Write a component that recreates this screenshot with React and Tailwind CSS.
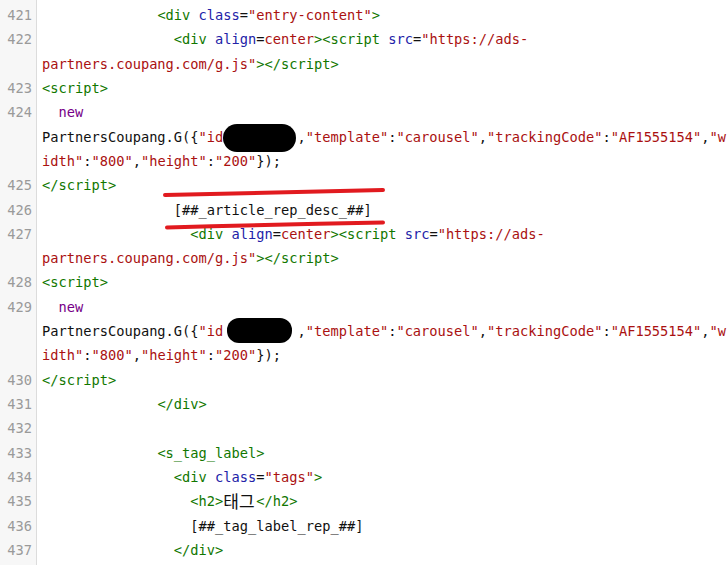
import React from "react";

const T = "text-[#117700]";
const A = "text-[#2222a8]";
const S = "text-[#aa1111]";
const K = "text-[#770088]";
const P = "text-[#111111]";

const sp = (n) => " ".repeat(n);

const scriptOpen = (indent) => [
  [P, sp(indent)],
  [T, "<div"],
  [P, " "],
  [A, "align"],
  [P, "="],
  [S, "center"],
  [T, "><script"],
  [P, " "],
  [A, "src"],
  [P, "="],
  [S, '"https://ads-'],
];

const scriptWrap = [
  [S, 'partners.coupang.com/g.js"'],
  [T, "></script>"],
];

const gLine = [
  [P, "PartnersCoupang.G({"],
  [S, '"id'],
  [P, sp(9)],
  [P, ","],
  [S, '"template"'],
  [P, ":"],
  [S, '"carousel"'],
  [P, ","],
  [S, '"trackingCode"'],
  [P, ":"],
  [S, '"AF1555154"'],
  [P, ","],
  [S, '"w'],
];

const gLine2 = [
  [S, 'idth"'],
  [P, ":"],
  [S, '"800"'],
  [P, ","],
  [S, '"height"'],
  [P, ":"],
  [S, '"200"'],
  [P, "});"],
];

const rows = [
  {
    n: 421,
    s: [
      [P, sp(14)],
      [T, "<div"],
      [P, " "],
      [A, "class"],
      [P, "="],
      [S, '"entry-content"'],
      [T, ">"],
    ],
  },
  { n: 422, s: scriptOpen(16) },
  { n: null, s: scriptWrap },
  { n: 423, s: [[T, "<script>"]] },
  { n: 424, s: [[P, "  "], [K, "new"]] },
  { n: null, s: gLine },
  { n: null, s: gLine2 },
  { n: 425, s: [[T, "</script>"]] },
  { n: 426, s: [[P, sp(16) + "[##_article_rep_desc_##]"]] },
  { n: 427, s: scriptOpen(18) },
  { n: null, s: scriptWrap },
  { n: 428, s: [[T, "<script>"]] },
  { n: 429, s: [[P, "  "], [K, "new"]] },
  { n: null, s: gLine },
  { n: null, s: gLine2 },
  { n: 430, s: [[T, "</script>"]] },
  { n: 431, s: [[P, sp(14)], [T, "</div>"]] },
  { n: 432, s: [] },
  { n: 433, s: [[P, sp(14)], [T, "<s_tag_label>"]] },
  {
    n: 434,
    s: [
      [P, sp(16)],
      [T, "<div"],
      [P, " "],
      [A, "class"],
      [P, "="],
      [S, '"tags"'],
      [T, ">"],
    ],
  },
  { n: 435, s: [[P, sp(18)], [T, "<h2>"], ["cjk", "태그"], [T, "</h2>"]] },
  { n: 436, s: [[P, sp(18) + "[##_tag_label_rep_##]"]] },
  { n: 437, s: [[P, sp(16)], [T, "</div>"]] },
];

export default function App() {
  return (
    <div className="relative flex h-[565px] w-[728px] overflow-hidden bg-white font-['DejaVu_Sans_Mono','Noto_Sans_CJK_KR',monospace] text-[13.7px]">
      <div className="flex w-[37px] shrink-0 flex-col border-r border-[#dcdcdc] bg-[#f7f7f7] pt-[3px] pr-[4px] text-right text-[#9a9a9a]">
        {rows.map((r, i) => (
          <div key={i} className="h-[24.32px] leading-[24.32px] whitespace-pre">
            {r.n ?? ""}
          </div>
        ))}
      </div>
      <div className="flex min-w-0 flex-1 flex-col pt-[3px] pl-[5px]">
        {rows.map((r, i) => (
          <div key={i} className="h-[24.32px] leading-[24.32px] whitespace-pre overflow-visible">
            {r.s.map(([c, t], j) =>
              c === "cjk" ? (
                <span
                  key={j}
                  className="inline-block w-[33px] overflow-visible text-[17px] tracking-[0px] leading-[24.32px] text-[#111111] font-['Noto_Sans_CJK_KR',sans-serif] align-top"
                >
                  {t}
                </span>
              ) : (
                <span key={j} className={c}>
                  {t}
                </span>
              )
            )}
          </div>
        ))}
      </div>
      <svg
        className="pointer-events-none absolute left-0 top-0"
        width="728"
        height="565"
        viewBox="0 0 728 565"
      >
        <rect x="223" y="124" width="73" height="28" rx="14" fill="#000" />
        <rect x="227" y="318" width="65" height="25" rx="12" fill="#000" />
        <path
          d="M165 195 Q 270 193 383 190"
          stroke="#e11a1f"
          strokeWidth="4"
          strokeLinecap="round"
          fill="none"
        />
        <path
          d="M167 227.5 Q 275 224.5 383 222.5"
          stroke="#e11a1f"
          strokeWidth="4"
          strokeLinecap="round"
          fill="none"
        />
      </svg>
    </div>
  );
}
